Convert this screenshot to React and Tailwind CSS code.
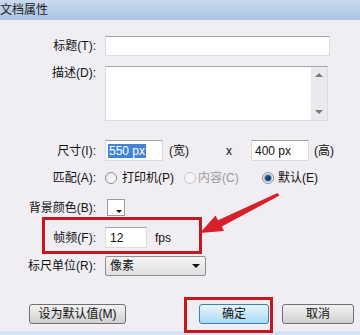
import React from "react";

const font = { fontFamily: '"Liberation Sans", "Noto Sans CJK SC", sans-serif' };

function Label({ children, className = "" }) {
  return (
    <div className={"w-[97px] shrink-0 pr-[1px] text-right text-[12px] leading-none text-[#111] " + className}>
      {children}
    </div>
  );
}

function Radio({ checked }) {
  return (
    <span className="flex h-[12px] w-[12px] shrink-0 items-center justify-center rounded-full border border-[#8e8f8f] bg-gradient-to-br from-[#e6e6e6] to-[#ffffff]">
      {checked && <span className="h-[6px] w-[6px] rounded-full bg-gradient-to-br from-[#2a5f8f] to-[#0d2c52] ring-1 ring-[#86b6dc]" />}
    </span>
  );
}

function Btn({ children, primary, className = "" }) {
  return (
    <div
      className={
        "flex h-[20px] items-center justify-center rounded-[3px] border text-[12px] text-[#111] " +
        (primary
          ? "border-[#3c7fb1] bg-gradient-to-b from-[#eaf6fd] via-[#c9e8fb] to-[#a7d9f5] "
          : "border-[#707070] bg-gradient-to-b from-[#f2f2f2] via-[#e3e3e3] to-[#cfcfcf] ") +
        className
      }
    >
      {children}
    </div>
  );
}

export default function App() {
  return (
    <div className="relative h-[335px] w-[360px] overflow-hidden bg-[#f0eef2]" style={font}>
      {/* title bar */}
      <div className="flex h-[20px] items-center bg-gradient-to-b from-[#c9daef] to-[#abc4e5] text-[12px] text-[#1b1b1b]">
        文档属性
      </div>

      <div className="pt-[16px]">
        {/* title */}
        <div className="flex h-[20px] items-center">
          <Label>标题(T):</Label>
          <div className="ml-[8px] h-[20px] w-[225px] border border-[#dcdcdc] border-t-[#a5a5a5] bg-white" />
        </div>

        {/* description */}
        <div className="mt-[10px] flex h-[55px] items-start">
          <Label className="pt-[1px]">描述(D):</Label>
          <div className="ml-[8px] flex h-[55px] w-[223px] border border-[#dcdcdc] border-t-[#a5a5a5] bg-white">
            <div className="flex-1" />
            <div className="flex w-[16px] flex-col items-center justify-between bg-[#ebe9ee] py-[6px]">
              <div className="h-0 w-0 border-x-[4px] border-b-[4px] border-x-transparent border-b-[#7a7a7a]" />
              <div className="h-0 w-0 border-x-[4px] border-t-[4px] border-x-transparent border-t-[#7a7a7a]" />
            </div>
          </div>
        </div>

        {/* size */}
        <div className="mt-[19px] flex h-[21px] items-center">
          <Label>尺寸(I):</Label>
          <div className="ml-[8px] flex h-[21px] w-[58px] items-center border border-[#dcdcdc] border-t-[#a5a5a5] bg-white pl-[2px]">
            <span className="bg-[#3f84d6] px-[1px] text-[12px] leading-[14px] text-white">550 px</span>
          </div>
          <span className="ml-[6px] text-[12px] text-[#111]">(宽)</span>
          <span className="ml-[37px] text-[12px] text-[#111]">x</span>
          <div className="ml-[19px] flex h-[21px] w-[58px] items-center border border-[#dcdcdc] border-t-[#a5a5a5] bg-white pl-[3px] text-[12px] text-[#111]">
            400 px
          </div>
          <span className="ml-[5px] text-[12px] text-[#111]">(高)</span>
        </div>

        {/* match */}
        <div className="mt-[9px] flex h-[16px] items-center">
          <Label>匹配(A):</Label>
          <div className="ml-[8px] flex items-center">
            <div className="flex w-[79px] items-center gap-[5px]">
              <Radio />
              <span className="text-[12px] text-[#111]">打印机(P)</span>
            </div>
            <div className="flex w-[78px] items-center gap-[2px]">
              <span className="flex h-[12px] w-[12px] rounded-full border border-[#c9c9c9] bg-[#f4f4f4]" />
              <span className="text-[12px] text-[#9a9a9a]">内容(C)</span>
            </div>
            <div className="flex items-center gap-[4px]">
              <Radio checked />
              <span className="text-[12px] text-[#111]">默认(E)</span>
            </div>
          </div>
        </div>

        {/* bg color */}
        <div className="mt-[13px] flex h-[17px] items-center">
          <Label>背景颜色(B):</Label>
          <div className="relative ml-[10px] h-[17px] w-[18px] border border-[#9a9a9a] bg-white">
            <div className="absolute bottom-[2px] right-[2px] h-0 w-0 border-x-[3px] border-t-[3px] border-x-transparent border-t-[#111]" />
          </div>
        </div>

        {/* fps */}
        <div className="mt-[11px] flex h-[21px] items-center">
          <Label>帧频(F):</Label>
          <div className="ml-[8px] flex h-[21px] w-[42px] items-center border border-[#dcdcdc] border-t-[#a5a5a5] bg-white pl-[4px] text-[12px] text-[#111]">
            12
          </div>
          <span className="ml-[8px] text-[12px] text-[#111]">fps</span>
        </div>

        {/* ruler */}
        <div className="mt-[8px] flex h-[20px] items-center">
          <Label>标尺单位(R):</Label>
          <div className="ml-[8px] flex h-[20px] w-[101px] items-center justify-between rounded-[2px] border border-[#8d8d8d] bg-gradient-to-b from-[#f6f6f6] to-[#dedede] pl-[4px] pr-[5px] text-[12px] text-[#111]">
            <span>像素</span>
            <div className="h-0 w-0 border-x-[4px] border-t-[4px] border-x-transparent border-t-[#111]" />
          </div>
        </div>

        {/* buttons */}
        <div className="mt-[28px] flex h-[20px] items-center">
          <Btn className="ml-[29px] w-[97px]">设为默认值(M)</Btn>
          <Btn primary className="ml-[73px] w-[70px]">确定</Btn>
          <Btn className="ml-[13px] w-[72px]">取消</Btn>
        </div>

        <div className="mt-[7px] h-[4px] bg-[#d3e2f3]" />
      </div>

      {/* annotations */}
      <div className="absolute left-[42px] top-[217px] h-[37px] w-[160px] border-[3px] border-[#c8161e]" />
      <div className="absolute left-[184px] top-[297px] h-[36px] w-[89px] border-[3px] border-[#c8161e]" />
      <svg className="absolute left-0 top-0" width="360" height="335" viewBox="0 0 360 335">
        <polygon
          points="277.5,193 279.5,195.5 221.8,226.6 224,231 200,233 215.5,215.5 218,220.2"
          fill="#d8202a"
        />
      </svg>
    </div>
  );
}
